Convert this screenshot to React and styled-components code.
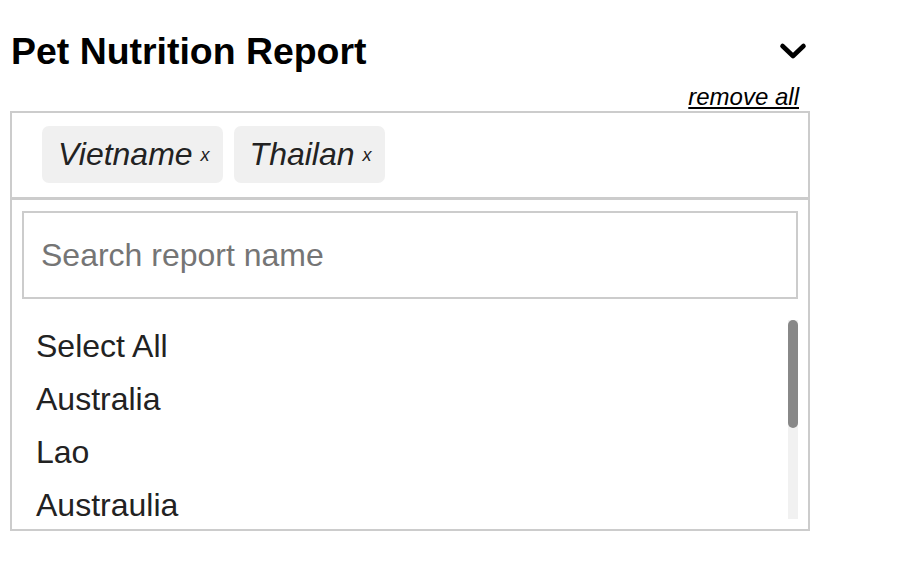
import * as React from "react"
import styled, { createGlobalStyle } from "styled-components"

const GlobalStyle = createGlobalStyle`
  body {
    margin: 0;
    background: #fff;
    font-family: "Liberation Sans", Arial, sans-serif;
  }
`

const Page = styled.div`
  width: 800px;
  padding: 30px 0 0 10px;
`

const Header = styled.div`
  display: flex;
  justify-content: space-between;
  align-items: center;
  height: 42px;
  padding-right: 3px;
`

const Title = styled.h1`
  margin: 0 0 0 1px;
  font-size: 37.44px;
  font-weight: 700;
  line-height: 42px;
  color: #000;
`

const Toggle = styled.button`
  display: flex;
  padding: 0;
  border: 0;
  background: none;
  cursor: pointer;
`

const RemoveRow = styled.div`
  display: flex;
  justify-content: flex-end;
  margin-top: 10px;
  padding-right: 11px;
`

const RemoveAll = styled.a`
  font-size: 24px;
  font-style: italic;
  line-height: 29px;
  color: #000;
  text-decoration: underline;
  cursor: pointer;
`

const Box = styled.div`
  border: 2px solid #ccc;
`

const Tags = styled.div`
  display: flex;
  gap: 11px;
  padding: 13px 30px 14px;
  border-bottom: 3px solid #ccc;
`

const Chip = styled.span`
  display: flex;
  align-items: center;
  height: 57px;
  padding: 0 13px 0 16px;
  border-radius: 7px;
  background: #f0f0f0;
  color: #222;
  font-size: 32px;
  font-style: italic;
`

const ChipClose = styled.span`
  margin-left: 8px;
  font-size: 18px;
  line-height: 1;
  cursor: pointer;
`

const Dropdown = styled.div`
  padding: 11px 10px 10px;
`

const Search = styled.input`
  box-sizing: border-box;
  display: block;
  width: 100%;
  height: 88px;
  padding: 0 17px;
  border: 2px solid #ccc;
  outline: none;
  font-family: inherit;
  font-size: 32px;
  color: #222;
  &::placeholder {
    color: #757575;
  }
`

const ListFrame = styled.div`
  display: flex;
  margin-top: 21px;
  height: 199px;
`

const List = styled.ul`
  flex: 1;
  list-style: none;
  margin: 0;
  padding: 0;
  overflow: hidden;
`

const Track = styled.div`
  width: 10px;
  background: #f1f1f1;
`

const Thumb = styled.div`
  height: 108px;
  border-radius: 5px;
  background: #888;
`

const Option = styled.li`
  padding: 8px 14px;
  font-size: 32px;
  line-height: 37px;
  color: #222;
  cursor: pointer;
`

const tags = ["Vietname", "Thailan"]
const options = ["Select All", "Australia", "Lao", "Austraulia"]

export default function App() {
  return (
    <>
      <GlobalStyle />
      <Page>
        <Header>
          <Title>Pet Nutrition Report</Title>
          <Toggle aria-label="collapse">
            <svg width="28" height="18" viewBox="0 0 28 18">
              <path
                d="M3.5 4 L14 14 L24.5 4"
                fill="none"
                stroke="#000"
                strokeWidth="4.6"
                strokeLinecap="round"
                strokeLinejoin="round"
              />
            </svg>
          </Toggle>
        </Header>
        <RemoveRow>
          <RemoveAll>remove all</RemoveAll>
        </RemoveRow>
        <Box>
          <Tags>
            {tags.map((t) => (
              <Chip key={t}>
                {t}
                <ChipClose>x</ChipClose>
              </Chip>
            ))}
          </Tags>
          <Dropdown>
            <Search placeholder="Search report name" />
            <ListFrame>
              <List>
                {options.map((o, i) => (
                  <Option key={i}>{o}</Option>
                ))}
              </List>
              <Track>
                <Thumb />
              </Track>
            </ListFrame>
          </Dropdown>
        </Box>
      </Page>
    </>
  )
}
